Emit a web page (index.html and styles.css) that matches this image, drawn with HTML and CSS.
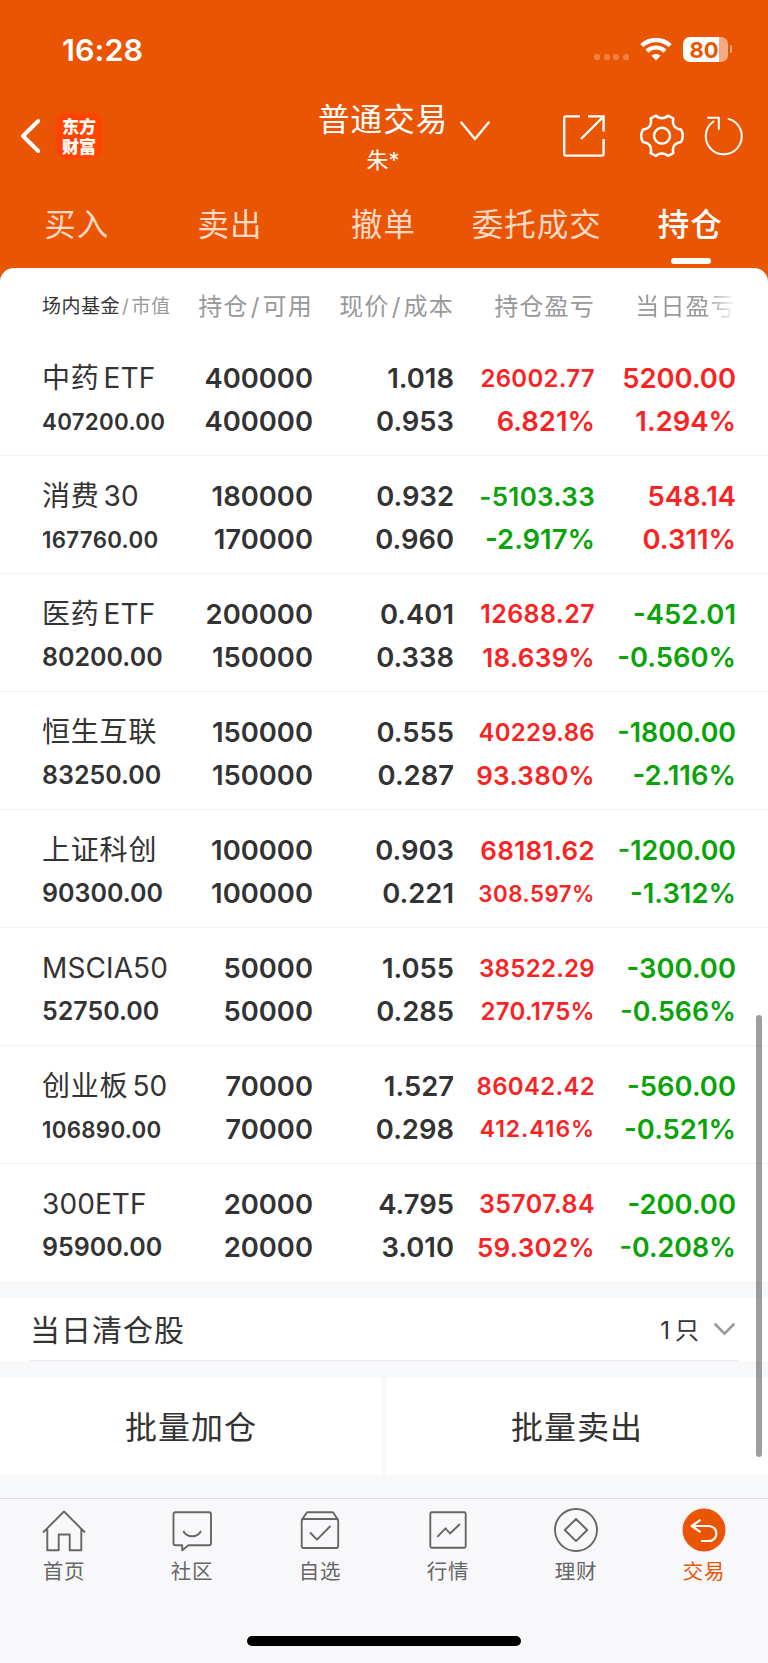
FILE: index.html
```html
<!DOCTYPE html>
<html lang="zh-CN">
<head>
<meta charset="UTF-8">
<meta name="viewport" content="width=device-width, initial-scale=1.0">
<title>持仓</title>
<link rel="stylesheet" href="styles.css">
</head>
<body>

<header class="top">
  <div class="status">
    <span class="time">16:28</span>
    <div class="signal"><i></i><i></i><i></i><i></i></div>
    <svg class="wifi" width="32" height="24" viewBox="0 0 32 24" fill="none" stroke="#fff">
      <path d="M1.8 8.6C9.8 1.1 22.2 1.1 30.2 8.6" stroke-width="4.4"/>
      <path d="M6.9 14.1C12.2 9.3 19.8 9.3 25.1 14.1" stroke-width="4.2"/>
      <path d="M16 23.4L11.4 18.8C13.9 16.5 18.1 16.5 20.6 18.8Z" fill="#fff" stroke="none"/>
    </svg>
    <div class="battery">80</div>
    <i class="battery-cap"></i>
  </div>

  <div class="nav">
    <svg class="back" width="22" height="38" viewBox="0 0 22 38" fill="none" stroke="#fff" stroke-width="4" stroke-linecap="round" stroke-linejoin="round"><path d="M18.2 4L3 19L18.2 34"/></svg>
    <div class="logo">东方<br>财富</div>
    <div class="title">
      <div class="account">普通交易</div>
      <div class="user">朱*</div>
    </div>
    <svg class="arrow" width="30" height="20" viewBox="0 0 30 20" fill="none" stroke="#fff" stroke-width="2.4" stroke-linecap="round" stroke-linejoin="round"><path d="M1.3 1.5L15 18L28.7 1.5"/></svg>
    <svg class="share" width="42" height="42" viewBox="0 0 42 42" fill="none" stroke="#fff" stroke-width="2.4"><path d="M17 1.4H3Q1.2 1.4 1.2 3V38.8Q1.2 40.6 3 40.6H38.8Q40.6 40.6 40.6 38.8V24M25 1.4H40.6V16.5M40 2L18 24"/></svg>
    <svg class="gear" width="44" height="44" viewBox="0 0 44 44" fill="none" stroke="#fff" stroke-width="2.5" stroke-linejoin="round">
      <path d="M16 1.6C17.8 3.8 20 4.2 22 4.2S26.2 3.8 28 1.6L33.3 4.4C32 10.5 34 14.5 41 15.6Q42.8 18.5 42.8 21.8T41 28C34 29.2 32 33 33.3 39.2L28 42C26.2 39.8 24 39.4 22 39.4S17.8 39.8 16 42L10.7 39.2C12 33 10 29.2 3 28Q1.2 25 1.2 21.8T3 15.6C10 14.5 12 10.5 10.7 4.4Z"/>
      <circle cx="22" cy="21.8" r="8"/>
    </svg>
    <svg class="refresh" width="40" height="40" viewBox="0 0 40 40" fill="none" stroke="#fff" stroke-width="2" stroke-linecap="round"><path d="M24.5 2.9A18 18 0 1 1 9.5 5.5M4 1.8H14.8V13"/></svg>
  </div>

  <nav class="tabs">
    <span>买入</span>
    <span>卖出</span>
    <span>撤单</span>
    <span>委托成交</span>
    <span class="on">持仓</span>
  </nav>
</header>

<main class="panel">
  <div class="head cols">
    <div class="kind"><b>场内基金</b><em>/</em>市值</div>
    <div>持仓<em>/</em>可用</div>
    <div>现价<em>/</em>成本</div>
    <div>持仓盈亏</div>
    <div class="fade">当日盈亏</div>
  </div>

  <div class="row cols">
    <div class="name">中药<span>ETF</span><p class="s22">407200.00</p></div>
    <div>400000<p>400000</p></div>
    <div>1.018<p>0.953</p></div>
    <div class="up"><p class="s24">26002.77</p><p>6.821%</p></div>
    <div class="up">5200.00<p>1.294%</p></div>
  </div>
  <div class="row cols">
    <div class="name">消费<span>30</span><p class="s22">167760.00</p></div>
    <div>180000<p>170000</p></div>
    <div>0.932<p>0.960</p></div>
    <div class="down"><p class="s26">-5103.33</p><p>-2.917%</p></div>
    <div class="up">548.14<p>0.311%</p></div>
  </div>
  <div class="row cols">
    <div class="name">医药<span>ETF</span><p class="s25">80200.00</p></div>
    <div>200000<p>150000</p></div>
    <div>0.401<p>0.338</p></div>
    <div class="up"><p class="s25">12688.27</p><p class="s26">18.639%</p></div>
    <div class="down">-452.01<p>-0.560%</p></div>
  </div>
  <div class="row cols">
    <div class="name">恒生互联<p class="s25">83250.00</p></div>
    <div>150000<p>150000</p></div>
    <div>0.555<p>0.287</p></div>
    <div class="up"><p class="s24">40229.86</p><p class="s26">93.380%</p></div>
    <div class="down"><p class="s27">-1800.00</p><p>-2.116%</p></div>
  </div>
  <div class="row cols">
    <div class="name">上证科创<p class="s25">90300.00</p></div>
    <div>100000<p>100000</p></div>
    <div>0.903<p>0.221</p></div>
    <div class="up"><p class="s26">68181.62</p><p class="s22">308.597%</p></div>
    <div class="down"><p class="s27">-1200.00</p><p>-1.312%</p></div>
  </div>
  <div class="row cols">
    <div class="name"><span class="latin">MSCIA50</span><p class="s25">52750.00</p></div>
    <div>50000<p>50000</p></div>
    <div>1.055<p>0.285</p></div>
    <div class="up"><p class="s24">38522.29</p><p class="s24">270.175%</p></div>
    <div class="down">-300.00<p class="s27">-0.566%</p></div>
  </div>
  <div class="row cols">
    <div class="name">创业板<span>50</span><p class="s22">106890.00</p></div>
    <div>70000<p>70000</p></div>
    <div>1.527<p>0.298</p></div>
    <div class="up"><p class="s24">86042.42</p><p class="s23">412.416%</p></div>
    <div class="down">-560.00<p>-0.521%</p></div>
  </div>
  <div class="row cols">
    <div class="name"><span class="latin">300ETF</span><p class="s25">95900.00</p></div>
    <div>20000<p>20000</p></div>
    <div>4.795<p>3.010</p></div>
    <div class="up"><p class="s25">35707.84</p><p class="s26">59.302%</p></div>
    <div class="down">-200.00<p class="s27">-0.208%</p></div>
  </div>
  <div class="scrollbar"></div>
</main>

<section class="cleared">
  <span class="label">当日清仓股</span>
  <span class="count">1<span>只</span></span>
  <svg width="21" height="13" viewBox="0 0 21 13" fill="none" stroke="#999" stroke-width="2.6" stroke-linecap="round"><path d="M1.5 1.5L10.5 10.6L19.5 1.5"/></svg>
</section>

<div class="batch">
  <div>批量加仓</div>
  <div>批量卖出</div>
</div>

<footer class="bottom">
  <div class="item">
    <svg width="46" height="46" viewBox="0 0 46 46"><path d="M2 25.5L23 4.5L44 25.5M6.3 22V43.3H17.7V27.5H28.7V43.3H40.3V22"/></svg>
    首页
  </div>
  <div class="item">
    <svg width="46" height="46" viewBox="0 0 46 46"><path d="M6.5 5.3H40Q42 5.3 42 7.3V36.3Q42 38.3 40 38.3H19.5L13.2 43.3V38.3H6.5Q4.5 38.3 4.5 36.3V7.3Q4.5 5.3 6.5 5.3ZM14.3 24Q17 29.3 23.2 29.3T32 24"/></svg>
    社区
  </div>
  <div class="item">
    <svg width="46" height="46" viewBox="0 0 46 46"><rect x="4.7" y="12" width="36.5" height="29" rx="2"/><path d="M4.7 13L9.5 6Q10 5.3 11 5.3H35Q36 5.3 36.5 6L41.2 13M13 25.5L20 32.6L33.5 19"/></svg>
    自选
  </div>
  <div class="item">
    <svg width="46" height="46" viewBox="0 0 46 46"><rect x="5.3" y="5.3" width="35.4" height="35.4" rx="1.5"/><path d="M12.3 29.8L20.5 21.3L25 26.5L35 17"/></svg>
    行情
  </div>
  <div class="item">
    <svg width="46" height="46" viewBox="0 0 46 46"><circle cx="23" cy="23" r="21"/><path d="M23 12L34.2 23L23 34.2L11.8 23Z"/></svg>
    理财
  </div>
  <div class="item on">
    <svg width="46" height="46" viewBox="0 0 46 46"><circle cx="23" cy="23" r="21"/><path d="M19.5 12.8L10.8 19L19.5 25.2M11 19H27.5C38 19 38 34 27.5 34H20"/></svg>
    交易
  </div>
  <div class="home-bar"></div>
</footer>

</body>
</html>
```
FILE: styles.css
```css
* {
  box-sizing: border-box;
}

body {
  margin: 0;
  width: 768px;
  height: 1663px;
  overflow: hidden;
  background: #f7f8fa;
  color: #333;
  font-family: Inter, "Noto Sans CJK SC", sans-serif;
}

svg {
  display: block;
  flex: none;
}

p {
  margin: 0;
}

/* orange header */
.top {
  height: 282px;
  background: #ea5504;
  color: #fff;
}

.status {
  display: flex;
  align-items: center;
  height: 98px;
  padding: 0 36px 0 62px;
}

.time {
  flex: 1;
  font-size: 30.5px;
  font-weight: 600;
  letter-spacing: 0.1px;
}

.signal {
  display: flex;
  gap: 3.4px;
  margin: 16px 11px 0 0;
}

.signal i {
  width: 6px;
  height: 6px;
  border-radius: 2px;
  background: rgba(255, 255, 255, 0.25);
}

.wifi {
  margin-right: 11px;
}

.battery {
  width: 45px;
  height: 25px;
  padding-right: 2px;
  border-radius: 7px;
  background: linear-gradient(90deg, #fff 80%, #f6aa83 80%);
  color: #ea5504;
  font-size: 22px;
  font-weight: 700;
  line-height: 26px;
  text-align: center;
}

.battery-cap {
  width: 2.5px;
  height: 8px;
  margin-left: 2px;
  border-radius: 0 4px 4px 0;
  background: #f6aa83;
}

.nav {
  display: flex;
  align-items: center;
  height: 76px;
  padding: 0 24px 0 20px;
}

.logo {
  width: 46px;
  height: 46px;
  margin-left: 14px;
  padding-top: 3px;
  border-radius: 9px;
  background: #ff4400;
  font-family: "Noto Sans CJK SC", sans-serif;
  font-size: 17px;
  font-weight: 900;
  line-height: 19.5px;
  text-align: center;
}

.title {
  width: 130px;
  margin-left: 216px;
  padding-top: 6px;
  text-align: center;
}

.account {
  font-size: 31.5px;
  letter-spacing: 1.1px;
  line-height: 42px;
  white-space: nowrap;
}

.user {
  font-size: 22px;
  line-height: 38px;
}

.arrow {
  margin: -10px 0 0 12px;
}

.share {
  margin-left: 73px;
}

.gear {
  margin-left: 35px;
}

.refresh {
  margin-left: auto;
}

.tabs {
  display: flex;
  height: 94px;
  line-height: 102px;
  font-size: 31.5px;
  letter-spacing: 1px;
  text-align: center;
}

.tabs span {
  width: 153.4px;
  color: #fbd9c6;
}

.tabs .on {
  position: relative;
  color: #fff;
  font-weight: 500;
}

.tabs .on::after {
  content: "";
  position: absolute;
  left: 57px;
  top: 84px;
  width: 40px;
  height: 6px;
  border-radius: 3px;
  background: #fff;
}

/* positions table */
.panel {
  position: relative;
  height: 1013px;
  margin-top: -14px;
  border-radius: 14px 14px 0 0;
  background: #fff;
}

.cols {
  display: grid;
  grid-template-columns: 143px 128px 141px 141px 141px;
  padding-left: 42px;
  text-align: right;
  white-space: nowrap;
}

.head {
  height: 70px;
  color: #999;
  font-size: 24px;
  letter-spacing: 1.2px;
  line-height: 77px;
}

.head em {
  margin: 0 2px;
  font-style: normal;
}

.head .kind {
  font-size: 19px;
  letter-spacing: 0.5px;
  text-align: left;
}

.head b {
  color: #333;
  font-weight: 400;
}

.fade {
  -webkit-mask-image: linear-gradient(90deg, #000 78%, transparent 101%);
  mask-image: linear-gradient(90deg, #000 78%, transparent 101%);
}

.row {
  height: 118px;
  padding-top: 19px;
  border-bottom: 1px solid #f4f4f4;
  font-size: 27.4px;
  font-weight: 600;
  line-height: 43px;
}

.row:nth-child(9) {
  height: 117px;
  border-bottom: 0;
}

.name {
  font-size: 28px;
  font-weight: 400;
  letter-spacing: 0.8px;
  text-align: left;
}

.name span {
  margin-left: 4px;
  letter-spacing: 0.1px;
}

.name .latin {
  margin-left: 0;
}

.up {
  color: #fa2323;
}

.down {
  color: #0aa30a;
}

.s22 { font-size: 22.3px; letter-spacing: 0.5px; }
.s23 { font-size: 23px; letter-spacing: 0.9px; }
.s24 { font-size: 24px; letter-spacing: 0.3px; }
.s25 { font-size: 25px; letter-spacing: 0.4px; }
.s26 { font-size: 26px; letter-spacing: 0.3px; }
.s27 { font-size: 26.8px; }

.name p {
  font-weight: 600;
}

.name .s22 {
  letter-spacing: 0.3px;
}

.name .s25 {
  letter-spacing: 0;
}

.scrollbar {
  position: absolute;
  left: 756px;
  top: 747px;
  width: 6px;
  height: 442px;
  border-radius: 3px;
  background: rgba(0, 0, 0, 0.38);
}

.cleared {
  display: flex;
  align-items: center;
  height: 63px;
  margin-top: 17px;
  padding: 0 33px 0 30px;
  background: linear-gradient(#ececee, #ececee) 30px 100% / 708px 1px no-repeat #fff;
}

.label {
  flex: 1;
  padding-bottom: 4px;
  font-size: 30px;
  letter-spacing: 1px;
}

.count {
  margin-right: 15px;
  padding-bottom: 2px;
  font-size: 24px;
}

.count span {
  margin-left: 5px;
}

.batch {
  display: flex;
  gap: 4px;
  height: 98px;
  margin-top: 16px;
}

.batch div {
  flex: 1;
  background: #fff;
  font-size: 32px;
  letter-spacing: 1px;
  line-height: 102px;
  text-align: center;
}

/* bottom tab bar */
.bottom {
  position: relative;
  display: flex;
  height: 165px;
  margin-top: 23px;
  border-top: 1px solid #dcdde0;
  background: #f8f8fb;
}

.item {
  display: flex;
  flex: 1;
  flex-direction: column;
  align-items: center;
  padding-top: 8px;
  color: #666;
  font-size: 20.5px;
  letter-spacing: 0.8px;
  line-height: 37px;
}

.item svg {
  fill: none;
  stroke: #666;
  stroke-width: 1.9;
  stroke-linejoin: round;
}

.item.on {
  color: #ea5504;
}

.item.on svg {
  stroke: #fff;
  stroke-width: 2.2;
}

.item.on circle {
  fill: #ea5504;
  stroke: #ea5504;
  stroke-width: 1;
}

.home-bar {
  position: absolute;
  left: 247px;
  bottom: 17px;
  width: 274px;
  height: 10px;
  border-radius: 5px;
  background: #000;
}
```
